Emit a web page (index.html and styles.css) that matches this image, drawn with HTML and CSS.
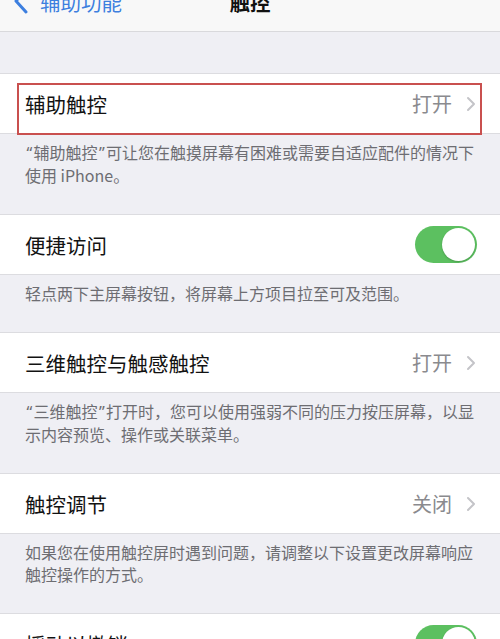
FILE: index.html
```html
<!DOCTYPE html>
<html lang="zh-CN">
<head>
<meta charset="utf-8">
<title>触控</title>
<link rel="stylesheet" href="styles.css">
</head>
<body>
<header class="nav">
  <div class="nav-back">
    <svg class="back-icon" width="16" height="26" viewBox="0 0 16 26"><path d="M13 1 L3 12 L13 23" fill="none" stroke="#3d7fdf" stroke-width="3" stroke-linecap="round" stroke-linejoin="round"/></svg>
    <span class="back-text">辅助功能</span>
  </div>
  <div class="nav-title">触控</div>
  <div></div>
</header>

<div class="top-gap"></div>

<section class="group">
  <div class="row highlighted">
    <span class="row-title">辅助触控</span>
    <span class="row-value">打开</span>
    <svg class="chev" width="10" height="16" viewBox="0 0 10 16"><path d="M2 2 L8 8 L2 14" fill="none" stroke="#c4c4c8" stroke-width="2" stroke-linecap="round" stroke-linejoin="round"/></svg>
    <div class="annot"></div>
  </div>
</section>
<p class="footer"><span class="q">“</span>辅助触控<span class="q">”</span>可让您在触摸屏幕有困难或需要自适应配件的情况下<br>使用 iPhone。</p>

<section class="group">
  <div class="row">
    <span class="row-title">便捷访问</span>
    <span class="toggle"><span class="knob"></span></span>
  </div>
</section>
<p class="footer">轻点两下主屏幕按钮，将屏幕上方项目拉至可及范围。</p>

<section class="group">
  <div class="row">
    <span class="row-title">三维触控与触感触控</span>
    <span class="row-value">打开</span>
    <svg class="chev" width="10" height="16" viewBox="0 0 10 16"><path d="M2 2 L8 8 L2 14" fill="none" stroke="#c4c4c8" stroke-width="2" stroke-linecap="round" stroke-linejoin="round"/></svg>
  </div>
</section>
<p class="footer"><span class="q">“</span>三维触控<span class="q">”</span>打开时，您可以使用强弱不同的压力按压屏幕，以显<br>示内容预览、操作或关联菜单。</p>

<section class="group">
  <div class="row">
    <span class="row-title">触控调节</span>
    <span class="row-value">关闭</span>
    <svg class="chev" width="10" height="16" viewBox="0 0 10 16"><path d="M2 2 L8 8 L2 14" fill="none" stroke="#c4c4c8" stroke-width="2" stroke-linecap="round" stroke-linejoin="round"/></svg>
  </div>
</section>
<p class="footer">如果您在使用触控屏时遇到问题，请调整以下设置更改屏幕响应<br>触控操作的方式。</p>

<section class="group">
  <div class="row">
    <span class="row-title">摇动以撤销</span>
    <span class="toggle"><span class="knob"></span></span>
  </div>
</section>
</body>
</html>
```

FILE: styles.css
```css
html, body {
  margin: 0;
  padding: 0;
}
body {
  background: #efeff4;
  font-family: "Noto Sans CJK SC", "Noto Sans", sans-serif;
  width: 500px;
  overflow: hidden;
}
.nav {
  height: 31px;
  background: #f8f8f8;
  border-bottom: 1px solid #d9d9dc;
  display: grid;
  grid-template-columns: 1fr auto 1fr;
  align-items: start;
  overflow: hidden;
}
.nav-back {
  display: flex;
  align-items: center;
  margin-top: -11px;
  padding-left: 13px;
}
.back-icon {
  display: block;
}
.back-text {
  color: #3d7fdf;
  font-size: 20.5px;
  line-height: 26px;
  margin-left: 11px;
}
.nav-title {
  font-size: 20.5px;
  font-weight: 700;
  color: #111;
  line-height: 26px;
  margin-top: -11px;
}
.top-gap {
  height: 41px;
}
.group {
  background: #fff;
  border-top: 1px solid #dcdce0;
  border-bottom: 1px solid #dcdce0;
}
.row {
  position: relative;
  height: 59px;
  display: flex;
  align-items: center;
  padding: 0 23px 0 25px;
}
.row-title {
  flex: 1;
  font-size: 20.5px;
  color: #121212;
}
.row-value {
  font-size: 20px;
  color: #8a8a8e;
  margin-right: 14px;
}
.chev {
  display: block;
  margin-right: 1px;
}
.annot {
  position: absolute;
  left: 17px;
  right: 18px;
  top: 9px;
  bottom: -2px;
  border: 2px solid #c9504f;
  pointer-events: none;
}
.toggle {
  width: 62px;
  height: 37px;
  border-radius: 19px;
  background: #5cc060;
  display: flex;
  align-items: center;
  justify-content: flex-end;
  padding: 0 2px;
  box-sizing: border-box;
}
.knob {
  width: 33px;
  height: 33px;
  border-radius: 50%;
  background: #fff;
  box-shadow: 0 1px 2px rgba(0,0,0,0.2);
}
.footer {
  margin: 0;
  padding: 7px 0 28px 25px;
  font-size: 16px;
  line-height: 22px;
  color: #6d6d72;
  white-space: nowrap;
}
.q {
  display: inline-block;
  width: 8.5px;
  text-align: center;
  font-family: "Noto Sans", sans-serif;
}
```
